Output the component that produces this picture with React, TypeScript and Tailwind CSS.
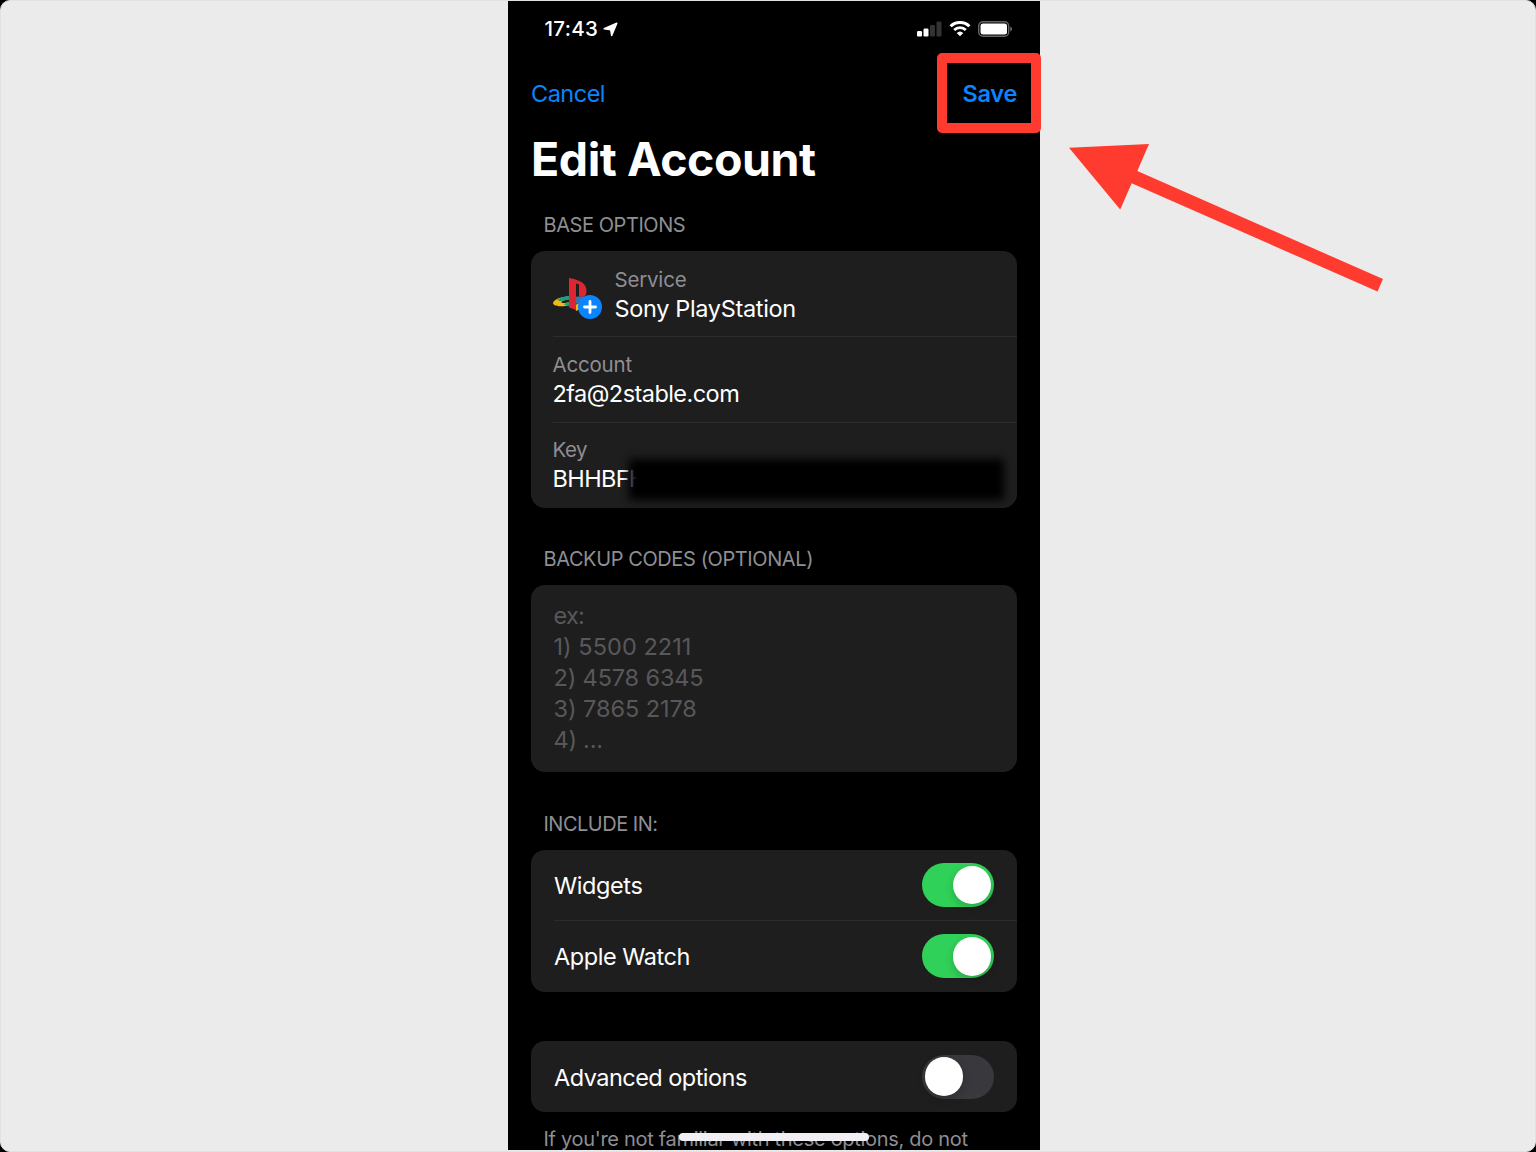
import React from "react";

function Toggle({ on }: { on: boolean }) {
  return (
    <span
      className={
        on
          ? "mr-[0.5px] flex h-11 w-[72.5px] items-center justify-end rounded-full bg-[#30d158] pr-[3px]"
          : "mr-[0.5px] flex h-11 w-[72.5px] items-center justify-start rounded-full bg-[#39383d] pl-[3px]"
      }
    >
      <span className="size-[38.5px] rounded-full bg-white shadow-[0_3px_8px_rgba(0,0,0,0.2)]" />
    </span>
  );
}

function PlayStationLogo() {
  return (
    <svg className="h-[36px] w-[50px]" viewBox="0 0 50 36" fill="none">
      <path d="M0 25 C0.500 21.500 9 18.500 17 18.300 V21 C12 21.800 8 23.300 8.500 24.500 C10 25.500 14 25 17 23.500 V27 C10 29 0.500 29 0 25Z" fill="#f2b90c" />
      <path d="M4 21.800 C8 19.200 12 18.300 17 18 V21.500 C13 21.800 10 22.500 7 23.300 Z" fill="#12a28c" />
      <path d="M11 26 L17 23.500 V27.300 C15 28 12.500 27.700 11 26Z" fill="#12a28c" />
      <path d="M22 19 C29 17 36 19 35 22 C34 27 27 31 23 33 V28 L28 25 L22 26Z" fill="#3f72a8" />
      <path d="M22 27 L31 23 L30 29 L23 33Z" fill="#f2b90c" />
      <path d="M16 0 C27 2 33.500 5 33.500 13 C33.500 18 31 20 26 18 V6.500 Q24 5.300 23 6 V32 L16 29.500Z" fill="#df2532" />
    </svg>
  );
}

export default function App() {
  return (
    <div className="h-[1152px] w-[1536px] bg-black font-['Inter',sans-serif]">
      <div className="flex h-full w-full justify-center overflow-hidden rounded-[10px] border border-[#e2e2e2] bg-[#ebebeb]">
        <main className="relative ml-3 h-[1149px] w-[532px] shrink-0 overflow-hidden bg-black px-[23px] text-white">
          <header className="flex h-14 items-center justify-between pl-[13.5px] pr-1">
            <div className="flex items-center gap-[4.5px]">
              <span className="text-[20.5px] font-medium leading-6 tracking-[0.35px]">17:43</span>
              <svg className="size-[15px]" viewBox="0 0 15 15">
                <path
                  d="M13.800 1.200 L8.700 13.500 L7.700 7.700 L1.200 6.800Z"
                  fill="white"
                  stroke="white"
                  strokeWidth="1.500"
                  strokeLinejoin="round"
                />
              </svg>
            </div>
            <div className="flex items-center">
              <svg className="h-4 w-[25px]" viewBox="0 0 25 16">
                <rect x="0" y="10" width="5" height="5.500" rx="1.300" fill="#fff" />
                <rect x="6.500" y="7.500" width="5" height="8" rx="1.300" fill="#fff" />
                <rect x="13" y="4" width="5" height="11.500" rx="1.300" fill="#333" />
                <rect x="19.500" y="0.500" width="5" height="15" rx="1.300" fill="#333" />
              </svg>
              <svg className="ml-[7px] h-4 w-[22px]" viewBox="0 0 22 16" fill="none" stroke="#fff">
                <path d="M1.600 5.300 A13.300 13.300 0 0 1 20.400 5.300" strokeWidth="3" />
                <path d="M5.200 9 A8.300 8.300 0 0 1 16.800 9" strokeWidth="2.800" />
                <path d="M11 15.300 L7.700 12 A4.800 4.800 0 0 1 14.300 12Z" fill="#fff" stroke="none" />
              </svg>
              <svg className="ml-[7px] h-4 w-[35px]" viewBox="0 0 35 16" fill="none">
                <rect x="0.700" y="0.700" width="30" height="14.600" rx="4.300" stroke="#666" strokeWidth="1.400" />
                <rect x="2.500" y="2.500" width="26.500" height="11" rx="2.500" fill="#fff" />
                <path d="M32.300 5.500 Q34 6.300 34 8 T32.300 10.500Z" fill="#777" />
              </svg>
            </div>
          </header>
          <nav className="flex h-[72px] items-center justify-between text-[23.5px] leading-[31px] text-[#0a84ff]">
            <span className="tracking-[-0.5px]">Cancel</span>
            <span className="font-semibold tracking-[-0.3px]">Save</span>
          </nav>
          <h1 className="h-[60px] text-[46.5px] font-bold leading-[60px] tracking-[-0.45px]">Edit Account</h1>
          <h2 className="ml-[12.5px] mt-[23px] text-[20px] leading-[26px] tracking-[-0.43px] text-[#8e8e93]">BASE OPTIONS</h2>
          <section className="mt-[13px] h-[256.5px] w-[485.5px] rounded-[14px] bg-[#1e1e1e] pl-[22px]">
            <div className="flex h-[86px] items-center border-b border-[#2c2c2e]">
              <div className="relative mr-[11.5px] mt-[5px] w-[50px]">
                <PlayStationLogo />
                <svg className="absolute left-[25px] top-[17px] size-6" viewBox="0 0 24 24">
                  <circle cx="12" cy="12" r="12" fill="#0a84ff" />
                  <path d="M12 6.500V17.500M6.500 12H17.500" stroke="#fff" strokeWidth="2.800" strokeLinecap="round" />
                </svg>
              </div>
              <div className="mt-0.5">
                <p className="text-[20.5px] leading-[28px] tracking-[-0.2px] text-[#8e8e93]">Service</p>
                <p className="text-[23.5px] leading-[30px] tracking-[-0.34px]">Sony PlayStation</p>
              </div>
            </div>
            <div className="-ml-[0.5px] flex h-[86px] flex-col justify-center border-b border-[#2c2c2e]">
              <p className="text-[20.5px] leading-[28px] tracking-[-0.2px] text-[#8e8e93]">Account</p>
              <p className="text-[23.5px] leading-[30px] tracking-[-0.55px]">2fa@2stable.com</p>
            </div>
            <div className="relative -ml-[0.5px] flex h-[84px] flex-col justify-center">
              <p className="text-[20.5px] leading-[28px] tracking-[-0.5px] text-[#8e8e93]">Key</p>
              <p className="text-[23.5px] leading-[30px] tracking-[-0.6px]">BHHBFH</p>
              <span className="absolute left-[76px] top-[36px] h-[41px] w-[375px] bg-black blur-[4px]" />
            </div>
          </section>
          <h2 className="ml-[12.5px] mt-[38.5px] text-[20px] leading-[26px] tracking-[-0.4px] text-[#8e8e93]">BACKUP CODES (OPTIONAL)</h2>
          <section className="mt-[13px] h-[187px] w-[485.5px] rounded-[14px] bg-[#1e1e1e] pl-[22.5px] pt-[15px] text-[23.5px] leading-[31.1px] text-[#58585b]">
            <p className="tracking-[-0.7px]">ex:</p>
            <p className="tracking-[0.04px]">1) 5500 2211</p>
            <p className="tracking-[-0.14px]">2) 4578 6345</p>
            <p className="tracking-[-0.06px]">3) 7865 2178</p>
            <p className="tracking-[-0.25px]">4) ...</p>
          </section>
          <h2 className="ml-[12.5px] mt-[39px] text-[20px] leading-[26px] tracking-[-0.5px] text-[#8e8e93]">INCLUDE IN:</h2>
          <section className="mt-[13px] w-[485.5px] rounded-[14px] bg-[#1e1e1e] pl-[23px] text-[23.5px]">
            <div className="flex h-[71px] items-center justify-between border-b border-[#2c2c2e] pr-[22px]">
              <span className="pt-0.5 tracking-[-0.4px]">Widgets</span>
              <Toggle on />
            </div>
            <div className="flex h-[70.5px] items-center justify-between pr-[22px]">
              <span className="pt-px tracking-[-0.45px]">Apple Watch</span>
              <Toggle on />
            </div>
          </section>
          <section className="mt-[49.5px] flex h-[71px] w-[485.5px] items-center justify-between rounded-[14px] bg-[#1e1e1e] pl-[23px] pr-[22px] text-[23.5px]">
            <span className="pt-0.5 tracking-[-0.53px]">Advanced options</span>
            <Toggle on={false} />
          </section>
          <p className="ml-[12.5px] mt-[14px] whitespace-nowrap text-[20px] leading-[26px] tracking-[-0.3px] text-[#8e8e93]">
            If you're not familiar with these options, do not
          </p>
          <span className="absolute left-[171px] top-[1132px] h-2 w-[190px] rounded-full bg-[#f2eff4]" />
        </main>
      </div>
      <div className="absolute left-[936.5px] top-[53px] h-20 w-[104px] rounded-[5px] border-[10px] border-[#ff3b30]" />
      <svg className="absolute left-[1060px] top-[135px] h-[165px] w-[330px]" viewBox="1060 135 330 165">
        <path d="M1069 147.700 L1149 144 L1137.300 171 L1383 279 L1377.500 291.500 L1131.700 183.300 L1120.200 209.500Z" fill="#ff3b30" />
      </svg>
    </div>
  );
}
